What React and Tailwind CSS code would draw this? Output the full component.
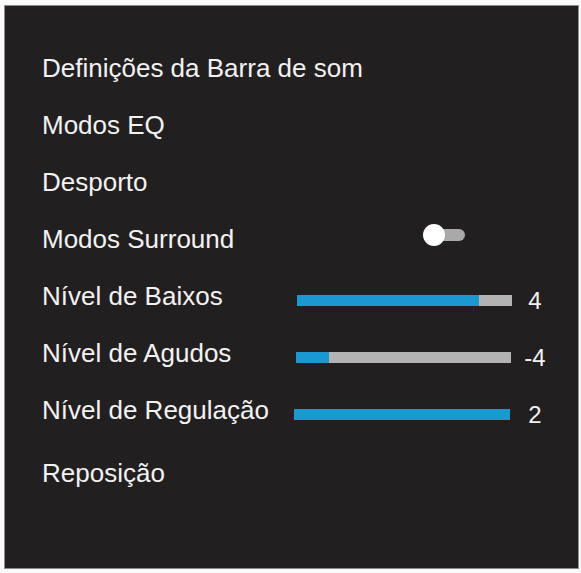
import React from "react";

const rows = [
  { label: "Definições da Barra de som" },
  { label: "Modos EQ" },
  { label: "Desporto" },
  { label: "Modos Surround", toggle: true },
  { label: "Nível de Baixos", bar: { ml: "ml-[3px]", w: "w-[215px]", fill: "w-[182px]" }, value: "4" },
  { label: "Nível de Agudos", bar: { ml: "ml-[2px]", w: "w-[215px]", fill: "w-[33px]" }, value: "-4" },
  { label: "Nível de Regulação", bar: { ml: "ml-0", w: "w-[216px]", fill: "w-[216px]" }, value: "2" },
];

function Bar({ bar, value }) {
  return (
    <div className="flex items-center mt-[10px]">
      <div className="w-[221px]">
        <div className={`${bar.ml} ${bar.w} h-[11px] bg-[#b3b3b3]`}>
          <div className={`${bar.fill} h-full bg-[#1a98d0]`} />
        </div>
      </div>
      <div className="w-[40px] text-center text-[24px] leading-none">{value}</div>
    </div>
  );
}

function Toggle() {
  return (
    <div className="ml-[129px] mb-[7px] relative w-[42px] h-[22px] flex items-center">
      <div className="absolute left-[6px] w-[36px] h-[12px] rounded-full bg-[#a9a9a9]" />
      <div className="relative w-[22px] h-[22px] rounded-full bg-white" />
    </div>
  );
}

export default function App() {
  return (
    <div
      className="w-[581px] h-[573px] bg-[#fafafa] pt-[5px] pl-[4px]"
      style={{ fontFamily: '"Liberation Sans", Arial, sans-serif' }}
    >
      <div className="w-[575px] h-[564px] border border-[#8c8c8c] bg-[#221f20] pt-[33px] pl-[37px] text-[#f2f2f2]">
        {rows.map((row) => (
          <div key={row.label} className="flex items-center h-[57px]">
            <div className="w-[252px] text-[26px] leading-none whitespace-nowrap">{row.label}</div>
            {row.toggle && <Toggle />}
            {row.bar && <Bar bar={row.bar} value={row.value} />}
          </div>
        ))}
        <div className="flex items-center h-[57px] mt-[6px]">
          <div className="text-[26px] leading-none">Reposição</div>
        </div>
      </div>
    </div>
  );
}
